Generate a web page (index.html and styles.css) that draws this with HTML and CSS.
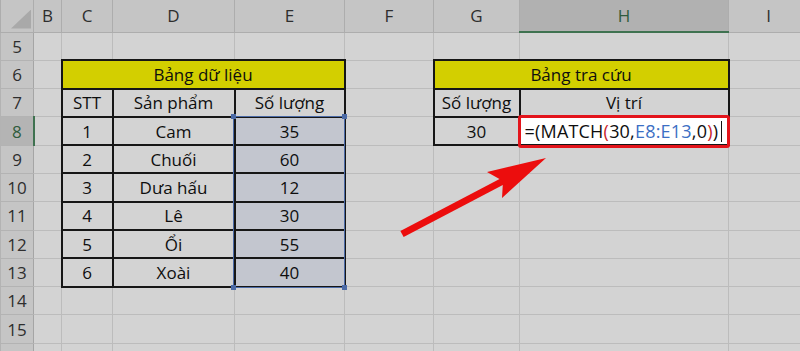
FILE: index.html
```html
<!DOCTYPE html>
<html lang="vi">

<head>
    <meta charset="UTF-8" />
    <meta name="viewport" content="width=device-width, initial-scale=1.0" />
    <title>Hàm MATCH</title>
    <link rel="stylesheet" href="styles.css">
</head>

<body>
    <div class="sheet">
        <table class="grid">
            <colgroup>
                <col class="w-rh"><col class="w-b"><col class="w-c"><col class="w-d"><col class="w-e">
                <col class="w-f"><col class="w-g"><col class="w-h"><col class="w-i">
            </colgroup>
            <!-- tiêu đề cột -->
            <tr class="head">
                <th class="corner"></th>
                <th>B</th><th>C</th><th>D</th><th>E</th><th>F</th><th>G</th><th class="on">H</th><th>I</th>
            </tr>
            <tr>
                <th class="rh">5</th>
                <td></td><td></td><td></td><td></td><td></td><td></td><td></td><td></td>
            </tr>
            <tr>
                <th class="rh">6</th>
                <td></td>
                <td class="box title" colspan="3">Bảng dữ liệu</td>
                <td></td>
                <td class="box title" colspan="2">Bảng tra cứu</td>
                <td></td>
            </tr>
            <tr>
                <th class="rh">7</th>
                <td></td>
                <td class="box">STT</td><td class="box">Sản phẩm</td><td class="box">Số lượng</td>
                <td></td>
                <td class="box">Số lượng</td><td class="box">Vị trí</td>
                <td></td>
            </tr>
            <tr>
                <th class="rh on">8</th>
                <td></td>
                <td class="box">1</td><td class="box">Cam</td><td class="box sel">35</td>
                <td></td>
                <td class="box">30</td>
                <td class="box formula">=(MATCH<span class="p1">(</span>30,<span class="ref">E8:E13</span>,0<span class="p1">)</span>)<span class="caret"></span></td>
                <td></td>
            </tr>
            <tr>
                <th class="rh">9</th>
                <td></td>
                <td class="box">2</td><td class="box">Chuối</td><td class="box sel">60</td>
                <td></td><td></td><td></td><td></td>
            </tr>
            <tr>
                <th class="rh">10</th>
                <td></td>
                <td class="box">3</td><td class="box">Dưa hấu</td><td class="box sel">12</td>
                <td></td><td></td><td></td><td></td>
            </tr>
            <tr>
                <th class="rh">11</th>
                <td></td>
                <td class="box">4</td><td class="box">Lê</td><td class="box sel">30</td>
                <td></td><td></td><td></td><td></td>
            </tr>
            <tr>
                <th class="rh">12</th>
                <td></td>
                <td class="box">5</td><td class="box">Ổi</td><td class="box sel">55</td>
                <td></td><td></td><td></td><td></td>
            </tr>
            <tr>
                <th class="rh">13</th>
                <td></td>
                <td class="box">6</td><td class="box">Xoài</td><td class="box sel">40</td>
                <td></td><td></td><td></td><td></td>
            </tr>
            <tr>
                <th class="rh">14</th>
                <td></td><td></td><td></td><td></td><td></td><td></td><td></td><td></td>
            </tr>
            <tr>
                <th class="rh">15</th>
                <td></td><td></td><td></td><td></td><td></td><td></td><td></td><td></td>
            </tr>
            <tr>
                <th class="rh"></th>
                <td></td><td></td><td></td><td></td><td></td><td></td><td></td><td></td>
            </tr>
        </table>

        <!-- vùng chọn E8:E13 -->
        <div class="selection">
            <i class="tl"></i><i class="tr"></i><i class="bl"></i><i class="br"></i>
        </div>

        <!-- mũi tên chỉ vào ô công thức -->
        <svg class="arrow" width="800" height="351" viewBox="0 0 800 351">
            <line x1="402" y1="234" x2="505" y2="180" stroke="#ec0d0d" stroke-width="7" />
            <polygon points="546,158 487,172 503,181 502,198" fill="#ec0d0d" />
        </svg>
    </div>
</body>

</html>
```

FILE: styles.css
```css
* {
    margin: 0;
    padding: 0;
    box-sizing: border-box;
}

body {
    background: #d3d3d3;
    font-family: "Open Sans", "Noto Sans", sans-serif;
    color: #0e0e0e;
}

.sheet {
    position: relative;
    width: 800px;
    height: 351px;
    overflow: hidden;
}

.grid {
    border-collapse: collapse;
    table-layout: fixed;
    width: 808px;
}

.w-rh { width: 33px; }
.w-b { width: 28px; }
.w-c { width: 51px; }
.w-d { width: 122px; }
.w-e { width: 110px; }
.w-f { width: 89px; }
.w-g { width: 86px; }
.w-h { width: 209px; }
.w-i { width: 80px; }

/* tiêu đề cột A, B, C ... */
.head th {
    height: 32px;
    background: #c5c5c5;
    border: 1px solid #adadad;
    border-top: none;
    font-weight: 500;
    font-size: 17px;
    color: #2e2e2e;
}

.head th.on {
    background: #b1b1b1;
    border-bottom: 2px solid #3f7250;
    color: #2f5c3d;
}

.head .corner {
    position: relative;
}

.head .corner::after {
    content: "";
    position: absolute;
    right: 2px;
    bottom: 3px;
    width: 20px;
    height: 19px;
    background: #a9a9a9;
    clip-path: polygon(100% 0, 100% 100%, 0 100%);
}

/* số thứ tự dòng */
.rh {
    height: 28.3px;
    background: #c5c5c5;
    border: 1px solid #b3b3b3;
    border-right: 1px solid #a5a5a5;
    font-weight: 500;
    font-size: 17px;
    color: #2e2e2e;
}

.rh.on {
    background: #b4b4b4;
    border-right: 2px solid #3f7250;
    color: #2f5c3d;
}

td {
    height: 28.3px;
    border: 1px solid #bcbcbc;
    text-align: center;
    font-size: 17px;
    font-weight: 500;
    line-height: 1;
    white-space: nowrap;
}

.box {
    border: 2px solid #161616;
}

.title {
    background: #d3cf00;
}

.sel {
    background: #c3c6cf;
}

.formula {
    position: relative;
    background: #fff;
    text-align: left;
    padding-left: 4px;
    font-size: 18px;
    letter-spacing: 0.2px;
}

.formula::after {
    content: "";
    position: absolute;
    left: -3px;
    top: -3px;
    right: -2px;
    bottom: -4px;
    border: 3px solid #e3141b;
    border-radius: 3px;
}

.formula .p1 {
    color: #c8232c;
}

.formula .ref {
    color: #3c6fc4;
}

.formula .caret {
    display: inline-block;
    width: 1px;
    height: 21px;
    margin-left: 3px;
    background: #111;
    vertical-align: -4px;
}

.selection {
    position: absolute;
    left: 233px;
    top: 116px;
    width: 112px;
    height: 172px;
    border: 1.5px solid #4b6aa6;
    pointer-events: none;
}

.selection i {
    position: absolute;
    width: 5px;
    height: 5px;
    background: #4b6aa6;
}

.selection .tl { left: -3px; top: -3px; }
.selection .tr { right: -3px; top: -3px; }
.selection .bl { left: -3px; bottom: -3px; }
.selection .br { right: -3px; bottom: -3px; }

.arrow {
    position: absolute;
    left: 0;
    top: 0;
    pointer-events: none;
}
```
